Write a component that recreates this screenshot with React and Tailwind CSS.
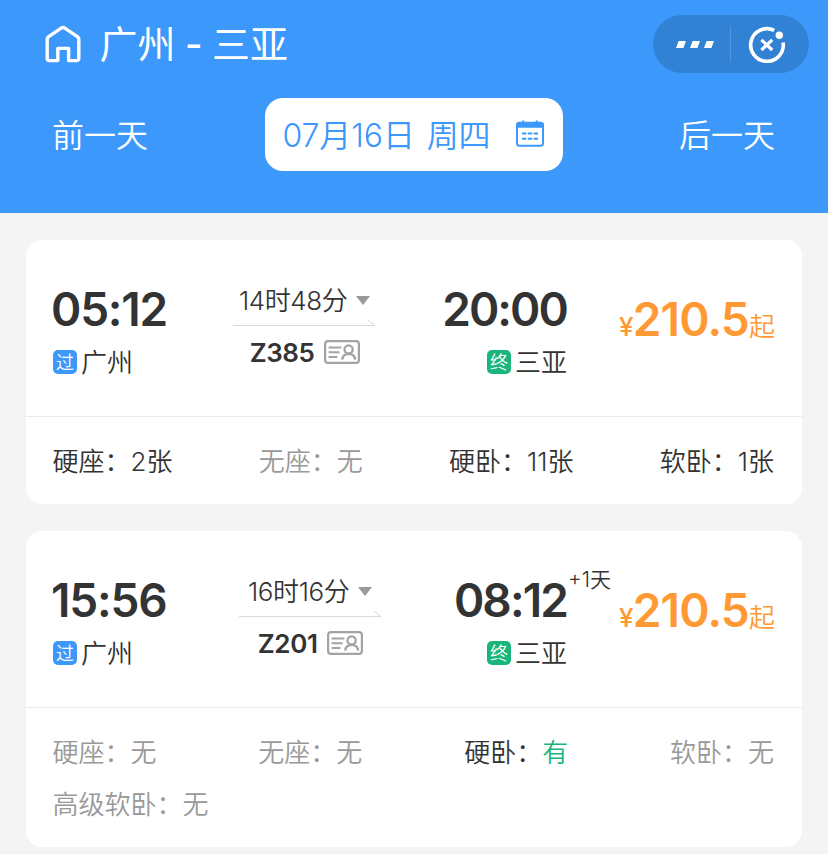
const trains = [
  {
    id: "Z385",
    depart: "05:12",
    arrive: "20:00",
    duration: "14时48分",
    price: "210.5",
    seats: [
      { name: "硬座", left: "2张" },
      { name: "无座", left: "无" },
      { name: "硬卧", left: "11张" },
      { name: "软卧", left: "1张" },
    ],
  },
  {
    id: "Z201",
    depart: "15:56",
    arrive: "08:12",
    nextDay: "+1天",
    duration: "16时16分",
    price: "210.5",
    seats: [
      { name: "硬座", left: "无" },
      { name: "无座", left: "无" },
      { name: "硬卧", left: "有" },
      { name: "软卧", left: "无" },
    ],
    extraSeats: [{ name: "高级软卧", left: "无" }],
  },
];

const HomeIcon = () => (
  <svg className="mb-px" width="36" height="38" viewBox="0 0 36 38" fill="none" stroke="white" strokeWidth="3.4" strokeLinejoin="round">
    <path d="M2.2 14.2 Q2.2 12.6 3.6 11.6 L16.6 2.9 Q18 2 19.4 2.9 L32.4 11.6 Q33.8 12.6 33.8 14.2 V33.2 Q33.8 35.6 31.4 35.6 H23.6 V23.4 H12.8 V35.6 H4.6 Q2.2 35.6 2.2 33.2 Z" />
  </svg>
);

const CalendarIcon = () => (
  <svg className="mb-0.5" width="28" height="27" viewBox="0 0 28 27" fill="none" stroke="#3c98fb">
    <rect x="1" y="3" width="26" height="22.8" rx="2.6" strokeWidth="2" />
    <path d="M1 7 V5 Q1 2.6 3.4 2.6 H24.6 Q27 2.6 27 5 V7 Z" fill="#3c98fb" strokeWidth="1.6" />
    <path d="M7.2 0.4 V4 M20.8 0.4 V4" strokeWidth="2" />
    <path d="M6 13.4 H10.4 M11.8 13.4 H16.2 M17.6 13.4 H22 M6 18.8 H10.4 M11.8 18.8 H16.2 M17.6 18.8 H22" strokeWidth="2" />
  </svg>
);

const CloseIcon = () => (
  <svg width="38" height="38" viewBox="0 0 38 38" fill="none" stroke="white">
    <path d="M26.2 5.4 A16.3 16.3 0 1 0 35.1 17.6" strokeWidth="3.6" />
    <circle cx="31.3" cy="10.2" r="3.7" fill="white" stroke="none" />
    <path d="M13.4 14.8 L24.2 25 M24.2 14.8 L13.4 25" strokeWidth="3.2" />
  </svg>
);

const IdCardIcon = () => (
  <svg width="36" height="24" viewBox="0 0 36 24" fill="none" stroke="#a3a3a3">
    <rect x="1.1" y="1.1" width="33.8" height="21.8" rx="3" strokeWidth="2.2" />
    <path d="M4.6 7.4 H17.4 M4.6 12.2 H15.6 M4.6 17 H13.4" strokeWidth="2" />
    <circle cx="24.6" cy="9.4" r="4.1" strokeWidth="2.3" />
    <path d="M18.2 19.6 Q18.8 14 24.6 13.8 Q30.6 14 31.2 19.6" strokeWidth="2.3" />
  </svg>
);

const Station = ({ tag, tagColor, name }) => (
  <div className="flex h-6 items-center gap-1 text-[26px] leading-6">
    <span className={`flex size-6 items-center justify-center rounded-[5px] pt-px text-[18px] leading-6 text-white ${tagColor}`}>
      {tag}
    </span>
    <span className="pt-0.5">{name}</span>
  </div>
);

const Seat = ({ seat }) => {
  const soldOut = seat.left === "无";
  return (
    <span className={soldOut ? "text-[#999999]" : "text-[#333333]"}>
      {seat.name}：
      <span className={seat.left === "有" ? "text-[#19b57b]" : ""}>{seat.left}</span>
    </span>
  );
};

const TrainCard = ({ train }) => (
  <div className="rounded-2xl bg-white">
    <div className="flex h-44 justify-between px-[27px] pt-[45px] text-[#333333]">
      <div className="flex w-[514px] justify-between">
        <div>
          <p className="-ml-0.5 text-[46px] font-[560] leading-12 tracking-[-1.2px]">{train.depart}</p>
          <div className="mt-[17px]">
            <Station tag="过" tagColor="bg-[#3c98fb]" name="广州" />
          </div>
        </div>
        <div className="w-[143px]">
          <div className="flex h-[30px] items-center justify-center gap-[9px] text-[26px] leading-[30px] tracking-[-0.4px]">
            <span className="pt-px">{train.duration}</span>
            <svg width="14" height="9" viewBox="0 0 14 9" fill="#999999">
              <path d="M0 0 H14 L7 9 Z" />
            </svg>
          </div>
          <svg className="mt-1" width="143" height="8" viewBox="0 0 143 8" fill="none" stroke="#d9d9d9">
            <path d="M0 6.5 H142 L135 1" />
          </svg>
          <div className="mt-[13px] flex h-6 items-center justify-center gap-[9px]">
            <span className="pt-px text-[26px] font-[560] leading-6 tracking-[-0.4px]">{train.id}</span>
            <IdCardIcon />
          </div>
        </div>
        <div className="relative flex flex-col items-end">
          <p className="text-[46px] font-[560] leading-12 tracking-[-1.9px]">{train.arrive}</p>
          {train.nextDay && (
            <span className="absolute left-full top-[-8px] ml-px whitespace-nowrap text-[21px] leading-6">
              {train.nextDay}
            </span>
          )}
          <div className="mt-[17px]">
            <Station tag="终" tagColor="bg-[#19b57b]" name="三亚" />
          </div>
        </div>
      </div>
      <div className="flex h-12 items-baseline pt-[10px] leading-12 text-[#ff9933]">
        <span className="text-[26px] font-medium tracking-[-0.8px]">¥</span>
        <span className="text-[46px] font-[560] tracking-[-0.8px]">{train.price}</span>
        <span className="text-[26px]">起</span>
      </div>
    </div>
    <div className="border-t border-[#ebebeb] pb-4 pl-[26.5px] pr-7 pt-[19px] text-[26px] leading-[52px]">
      <div className="flex justify-between">
        {train.seats.map((seat) => (
          <Seat key={seat.name} seat={seat} />
        ))}
      </div>
      {train.extraSeats?.map((seat) => (
        <div key={seat.name}>
          <Seat seat={seat} />
        </div>
      ))}
    </div>
  </div>
);

const Header = () => (
  <header className="h-[213px] bg-[#3c98fb] text-white">
    <div className="flex h-[88px] items-center justify-between pl-[44.5px] pr-[19px]">
      <div className="flex items-center gap-[19px]">
        <HomeIcon />
        <h1 className="text-[38px] font-normal leading-[48px] [word-spacing:-1.2px]">
          广州 <span className="font-medium">-</span> 三亚
        </h1>
      </div>
      <div className="flex h-[58px] w-[156px] items-center rounded-full bg-[#3182d5]">
        <div className="flex h-9 w-[78px] items-center justify-center border-r border-[#4e97e0] pl-1.5">
          <svg width="38" height="7" viewBox="0 0 38 7" fill="white">
            <path d="M2.6 0 H10 L7.4 7 H0 Z M16.6 0 H24 L21.4 7 H14 Z M30.6 0 H38 L35.4 7 H28 Z" />
          </svg>
        </div>
        <div className="flex flex-1 justify-center pr-1.5">
          <CloseIcon />
        </div>
      </div>
    </div>
    <div className="mt-[10px] flex h-[73px] items-center justify-between px-[53px] text-[32px]">
      <span className="-ml-px pt-0.5">前一天</span>
      <div className="flex h-full w-[298px] items-center justify-between rounded-[18px] bg-white pl-[18px] pr-[19px] text-[#3c98fb]">
        <span className="pt-0.5 tracking-[-0.1px] [word-spacing:3px]">07月16日 周四</span>
        <CalendarIcon />
      </div>
      <span className="pt-0.5">后一天</span>
    </div>
  </header>
);

const App = () => {
  return (
    <div className="min-h-[854px] w-[828px] overflow-hidden bg-[#f4f4f5] font-['Inter','Noto_Sans_CJK_SC',sans-serif] font-[350]">
      <Header />
      <main className="flex flex-col gap-[27px] px-[26px] pt-[27px]">
        {trains.map((train) => (
          <TrainCard key={train.id} train={train} />
        ))}
      </main>
    </div>
  );
};

export default App;
